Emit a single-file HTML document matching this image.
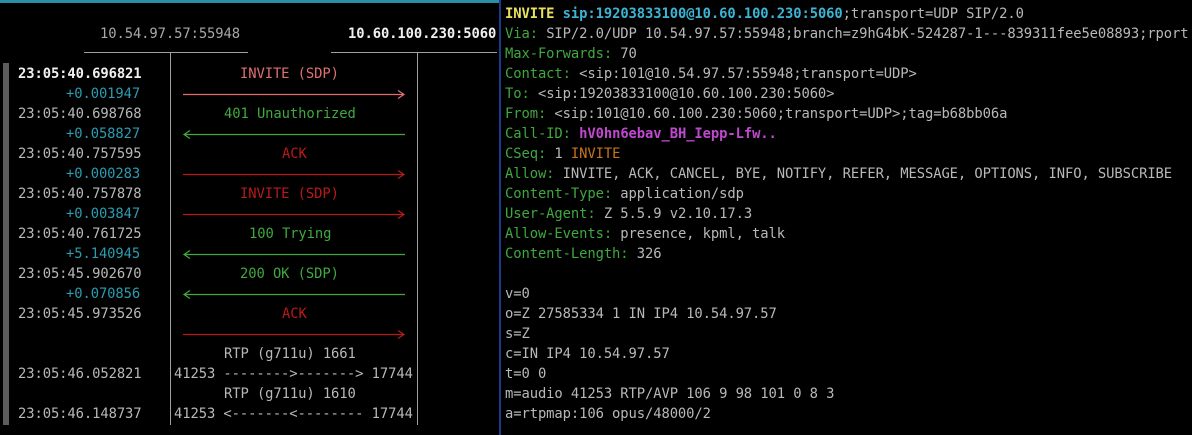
<!DOCTYPE html>
<html><head><meta charset="utf-8"><style>
html,body{margin:0;padding:0;background:#000;width:1192px;height:435px;overflow:hidden;position:relative}
.t{position:absolute;font-family:"DejaVu Sans Mono","Liberation Mono",monospace;font-size:13.85px;letter-spacing:-0.1px;line-height:20px;white-space:pre;color:#b8b8b8;margin-top:1px}
.b{font-weight:bold}
.g{color:#3fa83f}.r{color:#b81a1a}.s{color:#e07070}.c{color:#2a9cb0}.w{color:#f0f0f0}
.y{color:#e8e060}.cy{color:#3cb4d4}.m{color:#c048d0}.o{color:#c8741e}
.ln{position:absolute;height:1px}
</style></head><body>
<div style="position:absolute;left:0;top:0;width:500px;height:3px;background:#2a8ea6"></div>
<div style="position:absolute;left:499px;top:0;width:2px;height:435px;background:#1c3a8c"></div>
<div style="position:absolute;left:3px;top:63px;width:6px;height:362px;background:#5c5c5c"></div>
<div class="ln" style="left:84px;top:52px;width:164px;background:#a0a0a0"></div>
<div class="ln" style="left:331px;top:52px;width:166px;background:#a0a0a0"></div>
<div style="position:absolute;left:170px;top:53px;width:1px;height:372px;background:#a0a0a0"></div>
<div style="position:absolute;left:417px;top:53px;width:1px;height:372px;background:#a0a0a0"></div>

<div class="t" style="left:100px;top:23px;color:#a8a8a8">10.54.97.57:55948</div>
<div class="t b w" style="left:348px;top:23px">10.60.100.230:5060</div>

<div class="t b w" style="left:18px;top:63px">23:05:40.696821</div>
<div class="t s" style="left:240px;top:63px">INVITE (SDP)</div>
<div class="t c" style="left:66px;top:83px">+0.001947</div>
<div class="t" style="left:18px;top:103px">23:05:40.698768</div>
<div class="t g" style="left:224px;top:103px">401 Unauthorized</div>
<div class="t c" style="left:66px;top:123px">+0.058827</div>
<div class="t" style="left:18px;top:143px">23:05:40.757595</div>
<div class="t r" style="left:282px;top:143px">ACK</div>
<div class="t c" style="left:66px;top:163px">+0.000283</div>
<div class="t" style="left:18px;top:183px">23:05:40.757878</div>
<div class="t r" style="left:240px;top:183px">INVITE (SDP)</div>
<div class="t c" style="left:66px;top:203px">+0.003847</div>
<div class="t" style="left:18px;top:223px">23:05:40.761725</div>
<div class="t g" style="left:249px;top:223px">100 Trying</div>
<div class="t c" style="left:66px;top:243px">+5.140945</div>
<div class="t" style="left:18px;top:263px">23:05:45.902670</div>
<div class="t g" style="left:240px;top:263px">200 OK (SDP)</div>
<div class="t c" style="left:66px;top:283px">+0.070856</div>
<div class="t" style="left:18px;top:303px">23:05:45.973526</div>
<div class="t r" style="left:282px;top:303px">ACK</div>
<div class="t" style="left:224px;top:343px">RTP (g711u) 1661</div>
<div class="t" style="left:18px;top:363px">23:05:46.052821</div>
<div class="t" style="left:174px;top:363px">41253 --------&gt;-------&gt; 17744</div>
<div class="t" style="left:224px;top:383px">RTP (g711u) 1610</div>
<div class="t" style="left:18px;top:403px">23:05:46.148737</div>
<div class="t" style="left:174px;top:403px">41253 &lt;-------&lt;-------- 17744</div>

<svg style="position:absolute;left:0;top:1px" width="500" height="435">
<g fill="none" stroke-width="1.2">
<path d="M183 93.5H404M398 89.5l6 4-6 4" stroke="#e07070"/>
<path d="M405 133.5H184M190 129.5l-6 4 6 4" stroke="#3fa83f"/>
<path d="M183 173.5H404M398 169.5l6 4-6 4" stroke="#b81a1a"/>
<path d="M183 213.5H404M398 209.5l6 4-6 4" stroke="#b81a1a"/>
<path d="M405 253.5H184M190 249.5l-6 4 6 4" stroke="#3fa83f"/>
<path d="M405 293.5H184M190 289.5l-6 4 6 4" stroke="#3fa83f"/>
<path d="M183 333.5H404M398 329.5l6 4-6 4" stroke="#b81a1a"/>
</g></svg>

<div class="t" style="left:505px;top:3px"><span class="b y">INVITE</span> <span class="b cy">sip:19203833100@10.60.100.230:5060</span>;transport=UDP SIP/2.0</div>
<div class="t" style="left:505px;top:23px"><span class="g">Via:</span> SIP/2.0/UDP 10.54.97.57:55948;branch=z9hG4bK-524287-1---839311fee5e08893;rport</div>
<div class="t" style="left:505px;top:43px"><span class="g">Max-Forwards:</span> 70</div>
<div class="t" style="left:505px;top:63px"><span class="g">Contact:</span> &lt;sip:101@10.54.97.57:55948;transport=UDP&gt;</div>
<div class="t" style="left:505px;top:83px"><span class="g">To:</span> &lt;sip:19203833100@10.60.100.230:5060&gt;</div>
<div class="t" style="left:505px;top:103px"><span class="g">From:</span> &lt;sip:101@10.60.100.230:5060;transport=UDP&gt;;tag=b68bb06a</div>
<div class="t" style="left:505px;top:123px"><span class="g">Call-ID:</span> <span class="b m">hV0hn6ebav_BH_Iepp-Lfw..</span></div>
<div class="t" style="left:505px;top:143px"><span class="g">CSeq:</span> 1 <span class="o">INVITE</span></div>
<div class="t" style="left:505px;top:163px"><span class="g">Allow:</span> INVITE, ACK, CANCEL, BYE, NOTIFY, REFER, MESSAGE, OPTIONS, INFO, SUBSCRIBE</div>
<div class="t" style="left:505px;top:183px"><span class="g">Content-Type:</span> application/sdp</div>
<div class="t" style="left:505px;top:203px"><span class="g">User-Agent:</span> Z 5.5.9 v2.10.17.3</div>
<div class="t" style="left:505px;top:223px"><span class="g">Allow-Events:</span> presence, kpml, talk</div>
<div class="t" style="left:505px;top:243px"><span class="g">Content-Length:</span> 326</div>
<div class="t" style="left:505px;top:283px">v=0</div>
<div class="t" style="left:505px;top:303px">o=Z 27585334 1 IN IP4 10.54.97.57</div>
<div class="t" style="left:505px;top:323px">s=Z</div>
<div class="t" style="left:505px;top:343px">c=IN IP4 10.54.97.57</div>
<div class="t" style="left:505px;top:363px">t=0 0</div>
<div class="t" style="left:505px;top:383px">m=audio 41253 RTP/AVP 106 9 98 101 0 8 3</div>
<div class="t" style="left:505px;top:403px">a=rtpmap:106 opus/48000/2</div>
</body></html>
